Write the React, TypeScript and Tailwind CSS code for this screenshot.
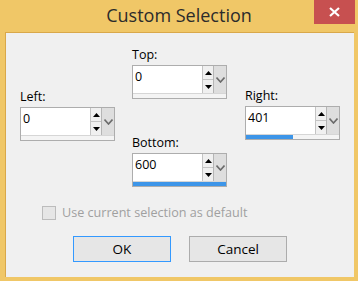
import React from "react";

const font = { fontFamily: '"Open Sans", "Noto Sans", sans-serif' };

function Spin() {
  return (
    <div className="flex flex-col w-[11px] h-full border-l border-[#c4c4c4] bg-[#f4f4f4]">
      <div className="flex-1 flex items-center justify-center border-b border-[#c4c4c4] bg-[#f0f0f0]">
        <svg width="7" height="4" viewBox="0 0 7 4"><path d="M0 4 L3.5 0 L7 4 Z" fill="#000" /></svg>
      </div>
      <div className="flex-1 flex items-center justify-center bg-[#f0f0f0]">
        <svg width="7" height="4" viewBox="0 0 7 4"><path d="M0 0 L3.5 4 L7 0 Z" fill="#000" /></svg>
      </div>
    </div>
  );
}

function Field({ label, value, pct }: { label: string; value: string; pct: number }) {
  return (
    <div className="flex flex-col w-[95px]">
      <div className="h-[16px] text-[12.5px] leading-[16px] text-[#000]">{label}</div>
      <div className="mt-[2px] h-[34px] border border-[#adadad] flex flex-col bg-[#f7f7f7]">
        <div className="h-[27px] flex">
          <div className="flex-1 bg-white pl-[2px] text-[12.5px] leading-[18px] text-black pt-[2px]">{value}</div>
          <Spin />
          <div className="w-[13px] h-full bg-[#dedede] border-l border-[#b5b5b5] flex items-center justify-center">
            <svg width="9" height="6" viewBox="0 0 9 6"><path d="M0.5 0.5 L4.5 5 L8.5 0.5" fill="none" stroke="#6b6b6b" strokeWidth="1.6" /></svg>
          </div>
        </div>
        <div className="flex-1 border-t border-[#d6d6d6] bg-[#f4f4f4] relative">
          <div className="h-full bg-[#3d95e8]" style={{ width: `${pct}%` }} />
        </div>
      </div>
    </div>
  );
}

export default function App() {
  return (
    <div className="w-[358px] h-[281px] bg-[#f0c767] flex flex-col overflow-hidden" style={font}>
      <div className="h-[32px] relative flex items-start justify-center">
        <div className="text-[18px] leading-[24px] text-[#2b2b2b] pt-[3px]">Custom Selection</div>
        <div className="absolute right-[3px] top-0 w-[41px] h-[24px] bg-[#c75050] flex items-center justify-center">
          <svg width="11" height="10" viewBox="0 0 11 10"><path d="M1 1 L10 9 M10 1 L1 9" stroke="#fff" strokeWidth="2.2" /></svg>
        </div>
      </div>
      <div className="ml-[5px] mr-[4px] h-[245px] bg-[#f0f0f0] border-l border-t border-[#d9a84a] flex flex-col">
        <div className="flex pl-[14px] items-start">
          <div className="mt-[56px]">
            <Field label="Left:" value="0" pct={0} />
          </div>
          <div className="ml-[17px] mt-[14px] flex flex-col">
            <Field label="Top:" value="0" pct={0} />
            <div className="mt-[36px]">
              <Field label="Bottom:" value="600" pct={100} />
            </div>
          </div>
          <div className="ml-[18px] mt-[55px]">
            <Field label="Right:" value="401" pct={50} />
          </div>
        </div>
        <div className="mt-[19px] pl-[36px] flex items-center gap-[6px]">
          <div className="w-[14px] h-[14px] border border-[#bcbcbc] bg-[#e6e6e6]" />
          <div className="text-[12.6px] leading-[14px] text-[#a0a0a0]">Use current selection as default</div>
        </div>
        <div className="mt-[16px] pl-[67px] flex gap-[18px]">
          <div className="w-[98px] h-[26px] border border-[#3399ff] bg-[#e6e6e6] flex items-center justify-center text-[13.5px] text-black">OK</div>
          <div className="w-[98px] h-[26px] border border-[#acacac] bg-[#e6e6e6] flex items-center justify-center text-[13.5px] text-black">Cancel</div>
        </div>
      </div>
    </div>
  );
}
